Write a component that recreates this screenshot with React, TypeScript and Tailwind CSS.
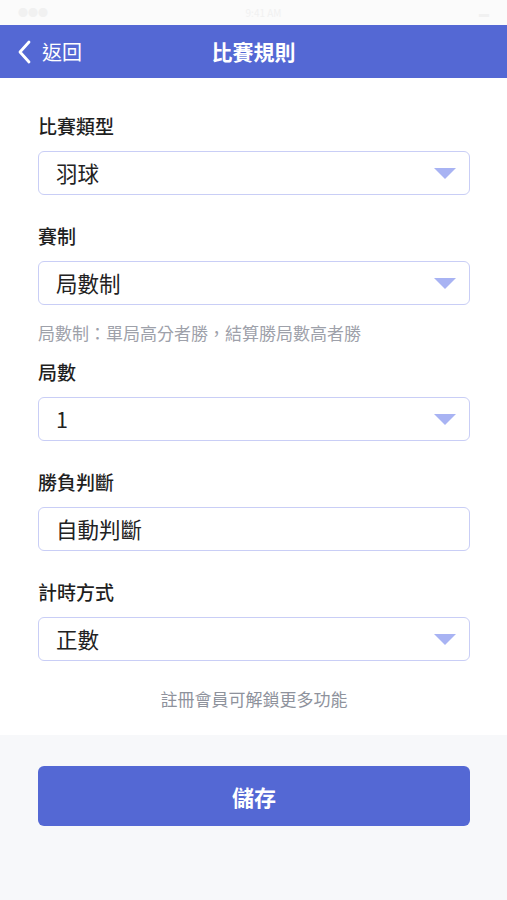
import React from 'react';

const FONT = { fontFamily: '"Noto Sans CJK TC", "Noto Sans", sans-serif' };

function Select({ value, arrow = true }: { value: string; arrow?: boolean }) {
  return (
    <div className="mt-[13px] flex h-[44px] items-center justify-between rounded-[6px] border border-[#c9cef6] bg-white pl-[17px] pr-[13px]">
      <span className="text-[21.5px] leading-none text-[#222]">{value}</span>
      {arrow && (
        <svg width="22" height="11" viewBox="0 0 22 11">
          <path d="M0 0 H22 L11 11 Z" fill="#a8b3f3" />
        </svg>
      )}
    </div>
  );
}

function Label({ text, className = '' }: { text: string; className?: string }) {
  return <div className={`h-[24px] text-[19px] font-medium leading-[24px] text-[#1f1f1f] ${className}`}>{text}</div>;
}

export default function App() {
  return (
    <div className="flex min-h-[900px] w-full flex-col bg-[#f7f8fa]" style={FONT}>
      <div className="flex h-[25px] items-center justify-between bg-[#fbfbfb] px-[18px] text-[10px] text-[#f1f1f1]">
        <span>●●●</span>
        <span>9:41 AM</span>
        <span>▬</span>
      </div>
      <header className="relative flex h-[53px] items-center bg-[#5468d4] text-white">
        <div className="flex items-center pl-[16px]">
          <svg width="16" height="26" viewBox="0 0 16 26">
            <path d="M13 3 L4 13 L13 23" fill="none" stroke="white" strokeWidth="2.8" strokeLinecap="round" strokeLinejoin="round" />
          </svg>
          <span className="ml-[10px] text-[20px] leading-none">返回</span>
        </div>
        <h1 className="absolute left-1/2 -translate-x-1/2 text-[21px] font-bold leading-none">比賽規則</h1>
      </header>

      <main className="bg-white pl-[38px] pr-[37px] pt-[36px] pb-[25px]">
        <Label text="比賽類型" />
        <Select value="羽球" />

        <Label text="賽制" className="mt-[29px]" />
        <Select value="局數制" />
        <p className="mt-[17px] text-[17px] leading-[22px] text-[#9ea1aa]">局數制：單局高分者勝，結算勝局數高者勝</p>

        <Label text="局數" className="mt-[16px]" />
        <Select value="1" />

        <Label text="勝負判斷" className="mt-[29px]" />
        <Select value="自動判斷" arrow={false} />

        <Label text="計時方式" className="mt-[29px]" />
        <Select value="正數" />

        <p className="mt-[27px] text-center text-[17px] leading-[22px] text-[#8e929c]">註冊會員可解鎖更多功能</p>
      </main>

      <div className="pl-[38px] pr-[37px] pt-[31px]">
        <button className="flex h-[60px] w-full items-center justify-center rounded-[6px] bg-[#5468d4] text-[22px] font-bold text-white">
          儲存
        </button>
      </div>
    </div>
  );
}
